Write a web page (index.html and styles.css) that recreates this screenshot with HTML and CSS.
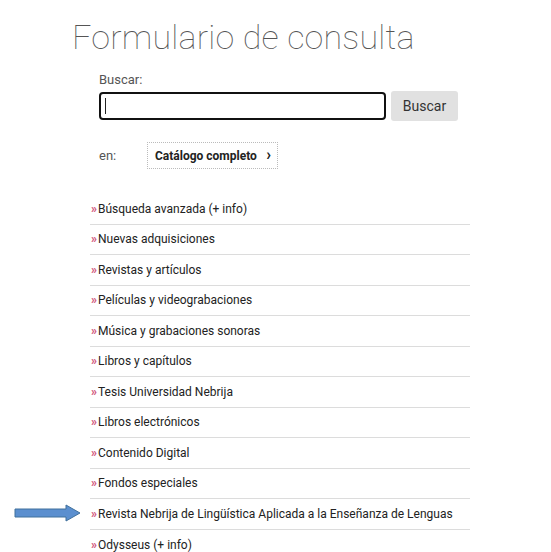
FILE: index.html
```html
<!DOCTYPE html>
<html lang="es">
<head>
<meta charset="utf-8">
<title>Formulario de consulta</title>
<link rel="stylesheet" href="styles.css">
</head>
<body>
<div class="page">
  <h1 class="title">Formulario de consulta</h1>
  <form class="search">
    <label class="label" for="q">Buscar:</label>
    <div class="search-row">
      <div class="input"><span class="caret"></span></div>
      <button class="btn" type="button">Buscar</button>
    </div>
    <div class="scope-row">
      <span class="en">en:</span>
      <span class="select">Catálogo completo <span class="chev">&#x203A;</span></span>
    </div>
  </form>
  <div class="list-wrap">
    <div class="pointer">
      <svg width="67" height="18" viewBox="0 0 67 18"><path d="M1 5 H52 V1 L66 9 L52 17 V13 H1 Z" fill="#5b8fcf" stroke="#41719c" stroke-width="1"/></svg>
    </div>
    <ul class="links">
      <li><span class="raquo">&raquo;</span>Búsqueda avanzada (+ info)</li>
      <li><span class="raquo">&raquo;</span>Nuevas adquisiciones</li>
      <li><span class="raquo">&raquo;</span>Revistas y artículos</li>
      <li><span class="raquo">&raquo;</span>Películas y videograbaciones</li>
      <li><span class="raquo">&raquo;</span>Música y grabaciones sonoras</li>
      <li><span class="raquo">&raquo;</span>Libros y capítulos</li>
      <li><span class="raquo">&raquo;</span>Tesis Universidad Nebrija</li>
      <li><span class="raquo">&raquo;</span>Libros electrónicos</li>
      <li><span class="raquo">&raquo;</span>Contenido Digital</li>
      <li><span class="raquo">&raquo;</span>Fondos especiales</li>
      <li class="marked"><span class="raquo">&raquo;</span>Revista Nebrija de Lingüística Aplicada a la Enseñanza de Lenguas</li>
      <li><span class="raquo">&raquo;</span>Odysseus (+ info)</li>
    </ul>
  </div>
</div>
</body>
</html>
```

FILE: styles.css
```css
html, body { margin: 0; padding: 0; background: #fff; }
body { font-family: Roboto, "Open Sans", Arial, sans-serif; color: #222; }
.page { padding-top: 16px; }
.title {
  margin: 0 0 0 72px;
  font-weight: 100;
  font-size: 34px;
  line-height: 42px;
  color: #555;
  letter-spacing: 0.2px;
}
.search { margin: 14px 0 0 99px; }
.label { display: block; font-size: 13px; color: #555; line-height: 16px; }
.search-row { display: flex; align-items: center; gap: 5px; margin-top: 3px; }
.input {
  box-sizing: border-box;
  width: 287px; height: 28px;
  border: 2px solid #111; border-radius: 4px;
  padding: 0 4px; background: #fff;
  display: flex; align-items: center;
}
.caret { width: 1px; height: 16px; background: #222; }
.btn {
  box-sizing: border-box;
  width: 67px; height: 30px;
  background: #e1e1e1; border: none; border-radius: 3px;
  font-family: Roboto, Arial, sans-serif; font-size: 14px; color: #333;
}
.scope-row { display: flex; align-items: center; margin-top: 21px; }
.en { width: 48px; font-size: 13px; color: #555; }
.select {
  box-sizing: border-box;
  height: 27px; width: 131px;
  border: 1px dotted #bbb;
  display: flex; align-items: center; padding: 0 6px 0 7px;
  font-size: 12px; font-weight: 700; color: #222;
}
.chev { margin-left: auto; font-size: 16px; font-weight: 700; line-height: 1; position: relative; top: -1px; }
.list-wrap { position: relative; margin-top: 25px; }
.pointer { position: absolute; left: 14px; top: 310px; }
.links { list-style: none; margin: 0 0 0 90px; padding: 0; width: 380px; }
.links li {
  height: 30.5px; box-sizing: border-box;
  display: flex; align-items: center;
  font-size: 12px; color: #222;
  border-bottom: 1px solid #dcdcdc;
  padding-left: 1px;
}
.links li:last-child { border-bottom: none; }
.raquo { color: #d0537a; font-size: 12px; font-weight: 700; margin-right: 1px; }
```
